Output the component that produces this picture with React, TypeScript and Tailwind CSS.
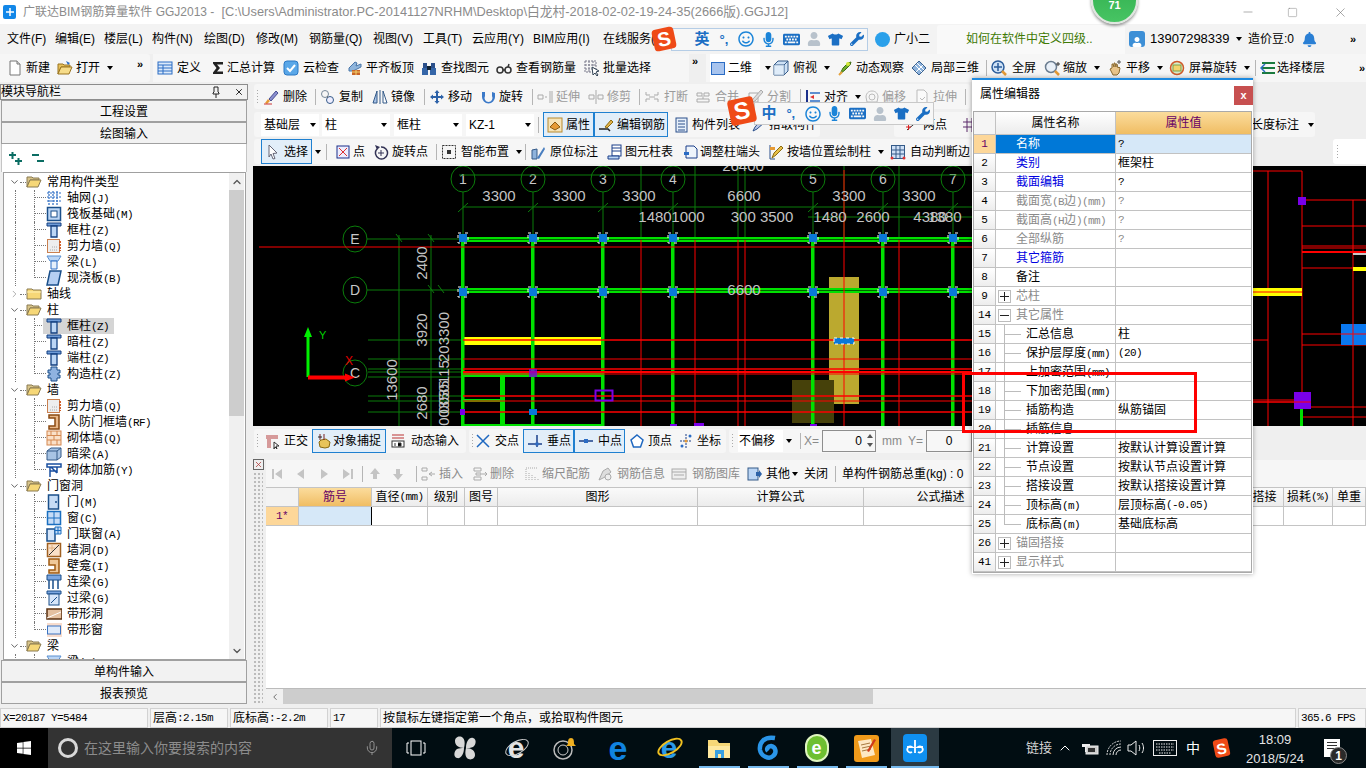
import { ReactNode } from "react";
import clsx from "clsx";
import { FaBell, FaKeyboard, FaMicrophone, FaRegSmile, FaTshirt, FaUser, FaWindows, FaWrench } from "react-icons/fa";
import { Minus, Square, X as XIcon, ChevronDown, ChevronRight, ChevronUp, Mic } from "lucide-react";

const TITLE_A = "广联达BIM钢筋算量软件 GGJ2013 -";
const TITLE_B = "[C:\\Users\\Administrator.PC-20141127NRHM\\Desktop\\白龙村-2018-02-02-19-24-35(2666版).GGJ12]";

// half-width latin in the old bitmap look, used in tree / grids
function Mixed({ text }: { text: string }) {
  const parts = text.split(/([\x00-\x7f]+)/).filter(Boolean);
  return (
    <>
      {parts.map((p, i) =>
        /^[\x00-\x7f]+$/.test(p) ? (
          <span key={i} className="font-['Liberation_Mono',monospace] text-[11px] tracking-[-0.6px]">{p}</span>
        ) : (
          <span key={i}>{p}</span>
        ),
      )}
    </>
  );
}

const B = "#2b6cc4";
const L = "#bcd6f5";
const O = "#e59a35";
const Y = "#f3d36b";
const D = "#555";

const icons: Record<string, ReactNode> = {
  doc: <><path d="M3 1h7l3 3v11H3z" fill="#fff" stroke="#777" /><path d="M10 1v3h3" fill="#ddd" stroke="#777" /></>,
  open: <><path d="M1 14V4h5l1 1h6v2H4z" fill="#e8c15a" stroke="#9a7420" /><path d="M1 14l3-7h11l-3 7z" fill="#f6dc8a" stroke="#9a7420" /><path d="M9 1l4 2-2 2z" fill={B} /></>,
  define: <><rect x="1" y="2" width="14" height="12" fill="#dceafa" stroke={B} /><path d="M1 5h14M1 8h14M1 11h14M6 5v9" stroke={B} /></>,
  sigma: <path d="M3 2h10v2.500H7l3 3.500-3 3.500h6V14H3v-1.500L6.500 8 3 3.500z" fill="#222" />,
  cloud: <><rect x="1" y="1" width="14" height="14" rx="3" fill="#5aa7e8" stroke="#2b78c4" /><path d="M4 8l3 3 5-6" stroke="#fff" strokeWidth="2" fill="none" /></>,
  level: <><path d="M2 8l6-6 2 1-1 3 5-2v3L6 11H2z" fill="#8fb5dc" stroke="#4a76a8" /><rect x="5" y="10" width="8" height="5" fill="#c9652a" /><path d="M5 12h8M9 10v5" stroke="#f3d36b" /></>,
  binoc: <><rect x="2" y="3" width="4" height="5" fill="#2a4f8a" /><rect x="10" y="3" width="4" height="5" fill="#2a4f8a" /><rect x="1" y="8" width="6" height="7" fill="#3566a8" /><rect x="9" y="8" width="6" height="7" fill="#3566a8" /><rect x="6" y="6" width="4" height="4" fill="#123" /></>,
  glasses: <><circle cx="4" cy="10" r="3" fill="none" stroke="#333" strokeWidth="1.500" /><circle cx="12" cy="10" r="3" fill="none" stroke="#333" strokeWidth="1.500" /><path d="M7 10h2M12 7l1-3" stroke="#333" strokeWidth="1.500" /></>,
  batch: <><path d="M1 1h11v11H1zM1 5h11M1 9h11M5 1v11M9 1v11" fill="none" stroke="#778" strokeDasharray="2 1" /><path d="M8 7l7 4-3 1 2 3-1 1-2-3-2 2z" fill="#fff" stroke="#345" /></>,
  sq2d: <rect x="1.500" y="2.500" width="13" height="12" fill="#a8c4ee" stroke={B} />,
  cube: <><path d="M1 5l4-4h10v10l-4 4H1z" fill="#cfe2f6" stroke="#345a88" /><path d="M1 5h10v10M11 5l4-4" fill="none" stroke="#345a88" /><rect x="1" y="5" width="10" height="10" fill="#eaf3fb" opacity=".6" /></>,
  orbit: <><path d="M3 14l3-6 5-5 3-1-1 3-5 5z" fill="#6fae2c" stroke="#3d6b12" /><circle cx="11" cy="4" r="2" fill="#d3e83d" /><path d="M2 15l3-3" stroke="#e8a33d" strokeWidth="2" /></>,
  cube3: <><path d="M8 1l7 7-7 7-7-7z" fill="#8eb3dc" stroke="#38608f" /><path d="M4 5l7 7M12 5l-7 7M6 3l7 7" stroke="#fff" /></>,
  full: <><circle cx="7" cy="7" r="6" fill="#cfe2f6" stroke="#2b5c9a" strokeWidth="1.500" /><path d="M7 3v8M3 7h8" stroke="#2b5c9a" strokeWidth="1.500" /><path d="M11 11l4 4" stroke={O} strokeWidth="2.500" /></>,
  zoomq: <><circle cx="7" cy="7" r="5.500" fill="#e9f0f8" stroke="#6b7d90" strokeWidth="1.500" /><path d="M11 11l4 4" stroke={O} strokeWidth="2.500" /><path d="M14 2v4M12 4h4" stroke="#333" /></>,
  hand: <><path d="M3 9l2-1V4l1 0 1 3V3l1 0 1 4V4l1 0 1 4 1-1 1 1-1 5-2 2H6z" fill="#e8c48a" stroke="#8a6a30" /><path d="M12 0v4M10 2h4" stroke="#555" /></>,
  rotscr: <><circle cx="8" cy="8" r="6.500" fill="#d8ecc8" stroke="#d05a2a" strokeWidth="1.500" /><rect x="4" y="5" width="8" height="6" fill={Y} stroke="#7aa04a" /></>,
  layers: <><path d="M2 3h13M2 8h13M2 13h13" stroke="#1b7a3e" strokeWidth="2" /><path d="M5 4L1 8l4 4" stroke="#2b6cc4" strokeWidth="1.500" fill="none" /></>,
  eraser: <><path d="M2 14l3-4 2 2-3 3z" fill={O} /><path d="M6 10l7-8 2 2-7 8z" fill="#8a8fd0" stroke="#4a4f90" /><path d="M1 15h8" stroke="#c33" /></>,
  copy: <><circle cx="5" cy="5" r="3.500" fill="none" stroke="#789" /><circle cx="10" cy="11" r="3.500" fill="#eef" stroke="#345a88" /><path d="M7 8l1 0" stroke={D} /></>,
  mirror: <><path d="M1 14l4-12v12z" fill="#a9c4e8" stroke="#345a88" /><path d="M15 14L11 2v12z" fill="#fff" stroke="#345a88" /><path d="M8 1v14" stroke="#345a88" /></>,
  move: <path d="M8 1l2.500 3H9v3h3V5.500L15 8l-3 2.500V9H9v3h1.500L8 15l-2.500-3H7V9H4v1.500L1 8l3-2.500V7h3V4H5.500z" fill="#2d62a8" />,
  rotcw: <path d="M4 3v4a4 4 0 1 0 7 0V3l3 1v4a6.500 6.500 0 1 1-13 0V3z" fill="#3b79c8" />,
  extend: <path d="M1 6h5v4H1zM8 8h2M13 2v12M15 2v12" stroke="#aaa" fill="none" />,
  trim: <path d="M1 6h5v4H1zM15 6h-5v4h5zM8 1v14" stroke="#aaa" fill="none" />,
  brk: <path d="M2 3v3h4M14 3v3h-4M2 13v-3h4M14 13v-3h-4M5 8h6" stroke="#aaa" fill="none" />,
  merge: <path d="M2 4h5v3H2zM9 4h5v3H9zM2 10h12v3H2zM8 7v3" stroke="#aaa" fill="none" />,
  split: <><path d="M2 4h9v9H2z" fill="#f5f5f5" stroke="#aaa" /><path d="M14 1l-8 9-1 3 3-1 8-9z" fill="#ddd" stroke="#aaa" /></>,
  align: <><path d="M2 1v14" stroke="#1a2f8a" strokeWidth="2" /><path d="M5 4h10M5 12h10" stroke="#2b6cc4" strokeWidth="1.500" /><path d="M5 8l4-2v4z" fill="#d33" /></>,
  offset: <><path d="M8 2c4 0 6 3 6 6l-1 5H3L2 8c0-3 2-6 6-6z" fill="none" stroke="#bbb" /><circle cx="8" cy="8" r="3" fill="none" stroke="#bbb" /></>,
  stretch: <><path d="M3 1h7l3 3v11H3z" fill="#fafafa" stroke="#bbb" /><path d="M6 9l2 2 3-3" stroke="#bbb" fill="none" /></>,
  prop: <><rect x="1" y="1" width="14" height="14" fill="#f6e4b8" stroke="#b88a30" /><path d="M3 10l5-5 5 5-5 3z" fill={O} stroke="#8a5a10" /></>,
  edit: <><path d="M1 12h9l2 2" stroke="#222" fill="none" strokeWidth="1.500" /><path d="M7 10l6-7 2 2-6 6z" fill="#e2b24a" stroke="#8a6a10" /></>,
  list: <><rect x="2" y="1" width="11" height="14" fill="#e7f0fa" stroke="#2a4f8a" /><path d="M4 4h7M4 7h7M4 10h7M4 13h7" stroke="#2a4f8a" /></>,
  pick: <path d="M2 14l2-4 7-8 3 3-8 7z" fill="#b8c6e8" stroke="#2a4f8a" />,
  two: <><path d="M2 13l12-10" stroke="#333" /><path d="M1 10h5M3.500 8v5M11 5h5M13.500 3v5" stroke="#d22" /></>,
  hatch: <path d="M1 5h14M1 10h14M5 1v14M10 1v14" stroke="#5a2a6a" fill="none" />,
  cursor: <path d="M4 1l8 8-4 .500 2 5-2 .500-2-5-2 3z" fill="#fff" stroke="#667" />,
  pt: <><rect x="2" y="2" width="12" height="12" fill="#eef" stroke="#1a2f8a" /><path d="M4 4l8 8M12 4l-8 8" stroke="#d33" /></>,
  rotpt: <><path d="M4 5a6 6 0 1 0 4-2" fill="none" stroke="#335" strokeWidth="1.500" /><path d="M2 1l5 2-3 3z" fill="#335" /><path d="M8 6v6M5 9h6" stroke="#335" /></>,
  smart: <><rect x="1.500" y="1.500" width="13" height="13" fill="#f5f5f5" stroke="#333" strokeDasharray="2 1" /><rect x="6" y="6" width="4" height="4" fill="#333" /></>,
  mark: <><path d="M2 15V6l5-1v10z" fill="#8eb3dc" stroke="#345a88" /><path d="M7 14l7-11 1 2-6 10z" fill="#4a7fc0" /></>,
  table: <><rect x="5" y="1" width="9" height="11" fill="#fff" stroke="#1a3f8a" /><path d="M5 4h9M5 7h9" stroke="#1a3f8a" /><path d="M1 12h11v3H1z" fill={L} stroke="#1a3f8a" /></>,
  adjust: <><path d="M3 2h8l3 3v9H3z" fill="#eef4fb" stroke="#1a3f8a" /><path d="M1 8h5v3H1z" fill={B} /></>,
  wallcol: <><path d="M2 1v14h5" stroke="#2a4f8a" fill="none" /><path d="M4 14l2-5 7-7 2 2-7 7z" fill="#e8c14a" stroke="#8a6a10" /><rect x="2" y="3" width="5" height="3" fill={O} /></>,
  auto: <><rect x="1.500" y="1.500" width="13" height="13" fill="#cfe0f6" stroke="#345a88" /><path d="M1 6h14M1 10h14M6 1v14M10 1v14" stroke="#345a88" /><circle cx="2" cy="14" r="1.500" fill="#d33" /><circle cx="14" cy="14" r="1.500" fill="#d33" /></>,
  ortho: <><path d="M2 2h12v4H7v9H3V6H2z" fill="#d69a9a" /><path d="M10 9l5 4-3 0 1 3-2-2-1 2z" fill="#fff" stroke="#333" /></>,
  snap: <><path d="M3 9l2-2 5-1 4 3-1 5-4 1-5-1z" fill="#e8c45a" stroke="#8a6a10" /><path d="M4 1v6M8 1v6" stroke="#7a2020" /><path d="M2 4h4" stroke="#222" /></>,
  dyn: <><path d="M2 2h12M2 5h12" stroke="#b33" /><rect x="2" y="8" width="12" height="6" fill="#fff" stroke="#333" /><path d="M5 10v3M8 10h3v3H8" stroke="#333" /></>,
  cross: <path d="M2 2l12 12M14 2L2 14" stroke="#1f68c0" strokeWidth="1.500" />,
  perp: <><path d="M1 11h14" stroke="#1a3f8a" strokeWidth="1.500" /><path d="M10 2v12" stroke="#1a3f8a" strokeWidth="1.500" /><rect x="8.500" y="9.500" width="3" height="3" fill="#2b6cc4" /></>,
  mid: <><path d="M1 8h14" stroke="#1a3f8a" strokeWidth="1.500" /><rect x="6" y="6" width="4" height="4" fill="#2b6cc4" /></>,
  vertex: <path d="M8 2l6 5-2.500 7h-7L2 7z" fill="#fff" stroke="#1f68c0" strokeWidth="1.500" />,
  coord: <><path d="M8 1v14M2 8h12" stroke="#1a3f8a" strokeDasharray="2 1" /><circle cx="4" cy="13" r="1.500" fill={B} /><circle cx="12" cy="3" r="1.500" fill={B} /><circle cx="8" cy="8" r="1.500" fill={O} /></>,
  first: <path d="M3 3h2v10H3zM13 3v10L6 8z" fill="#c4c4c4" />,
  prev: <path d="M11 3v10L4 8z" fill="#c4c4c4" />,
  next: <path d="M5 3v10l7-5z" fill="#c4c4c4" />,
  last: <path d="M11 3h2v10h-2zM3 3v10l7-5z" fill="#c4c4c4" />,
  up: <path d="M8 2l5 6h-3v5H6V8H3z" fill="#c4c4c4" />,
  down: <path d="M8 14l5-6h-3V3H6v5H3z" fill="#c4c4c4" />,
  insert: <path d="M1 2h5v3H1zM1 11h5v3H1zM8 8h6M11 6l-3 2 3 2" stroke="#aaa" fill="none" />,
  del: <path d="M2 2h7v3H2zM2 11h7v3H2zM4 7h5v2H4zM10 8h5M13 6l2 2-2 2" stroke="#aaa" fill="none" />,
  scale: <path d="M2 14V3M5 14V6M8 14V8M11 14V10M14 14v-2M2 2h12" stroke="#aaa" strokeDasharray="1 1" fill="none" />,
  info: <><path d="M2 14l4-9 5-3 3 4-6 5z" fill="#ddd" stroke="#aaa" /><circle cx="11" cy="11" r="3" fill="#eee" stroke="#aaa" /></>,
  lib: <><rect x="1" y="3" width="14" height="10" fill="#eee" stroke="#aaa" /><path d="M1 6h14M3 9h10" stroke="#aaa" /></>,
  other: <><rect x="1" y="2" width="10" height="12" fill={L} stroke="#345a88" /><path d="M9 6h3V4l3 4-3 4v-2H9z" fill="#2d62a8" /></>,
};

const tree: Record<string, ReactNode> = {
  fo: <><path d="M1 13V3h5l1 1h6v2H4z" fill="#d8c48a" stroke="#8a7a50" /><path d="M1 13l3-7h11l-3 7z" fill="#f6d777" stroke="#8a7a50" /></>,
  fc: <><path d="M1 13V3h5l1 1h8v9z" fill="#f6d777" stroke="#8a7a50" /><path d="M1 6h14" stroke="#fff2b8" /></>,
  grid: <path d="M1 3h14M1 7h14M1 11h14M3 1v14M7 1v14M11 1v14" stroke={B} strokeDasharray="2 1" fill="none" strokeWidth="1.200" />,
  raft: <><rect x="1.500" y="1.500" width="13" height="13" fill={L} stroke="#1a4f8a" strokeWidth="1.500" /><rect x="5" y="5" width="6" height="6" fill="#fff" stroke="#1a4f8a" /></>,
  col: <><path d="M1 1h14v3H1z" fill="#6f9cd8" stroke="#123f80" /><path d="M5 4h6v11H5z" fill="#bcd6f5" stroke="#123f80" strokeWidth="1.300" /></>,
  wall: <><rect x="1.500" y="1.500" width="12" height="13" fill="#eee" stroke="#c98050" /><path d="M4 12h8M6 9h6" stroke="#aaa" strokeDasharray="1 1" /><path d="M14 3v10" stroke="#d0602a" strokeDasharray="2 1" strokeWidth="2" /></>,
  beam: <><path d="M1 2h14l-3 5H4z" fill={L} stroke="#5a90d0" /><path d="M5 7h6v8H5z" fill="#e6f0fb" stroke="#2b6cc4" /></>,
  slab: <path d="M4 1h11l-3 14H1z" fill="#b5cff2" stroke="#1a4f8a" strokeWidth="1.500" />,
  gz: <path d="M5 1h6v3h3v3h-2v2h2v3h-3v3H5v-3H2V9h2V7H2V4h3z" fill="#8fb2e0" stroke="#1a4f8a" />,
  dwall: <path d="M3 1h10v14H3v-3h6V4H3z" fill="#e8b88a" stroke="#8a4a12" strokeWidth="1.500" />,
  brick: <><rect x="1" y="1" width="14" height="14" fill="#fae0c8" stroke="#d48850" /><path d="M1 5.500h14M1 10h14M5 1v4.500M11 1v4.500M8 5.500V10M5 10v5M11 10v5" stroke="#d48850" /></>,
  hidden: <><path d="M1 5l4-3h10v9l-4 3H1z" fill="#a8c4e4" stroke="#345a88" /><path d="M1 5h10v9M11 5l4-3" fill="none" stroke="#345a88" /></>,
  add: <path d="M1 2h14v3H1zM4 5v10M11 5v6M5 5l6 6M4 9h7" fill="none" stroke="#1a4fa0" strokeWidth="1.500" />,
  door: <><rect x="2.500" y="1" width="10" height="14" fill="#c6dcf6" stroke="#1a4f8a" strokeWidth="1.500" /><circle cx="10" cy="8" r="1" fill="#1a4f8a" /></>,
  win: <><rect x="1.500" y="1.500" width="13" height="13" fill="#c6dcf6" stroke="#1a6fc0" strokeWidth="1.500" /><path d="M8 1v14M1 8h14" stroke="#1a6fc0" /></>,
  dw: <><path d="M1 3h8v12H1z" fill="#d6e6fa" stroke="#1a4f8a" strokeWidth="1.500" /><path d="M9 1h6v7H9z" fill="#c6dcf6" stroke="#1a6fc0" /><path d="M12 1v7M9 4.500h6" stroke="#1a6fc0" /></>,
  hole: <><rect x="1.500" y="1.500" width="13" height="13" fill="#fae0c8" stroke="#a06020" strokeWidth="1.500" /><path d="M3 13L13 3" stroke="#333" /><path d="M3 6h6M6 3v6" stroke="#e0b080" /></>,
  niche: <path d="M3 1h10v14H3v-3h6V7H3z" fill="#f0c898" stroke="#a05a10" strokeWidth="1.500" />,
  conn: <><path d="M1 1h14v5H1z" fill="#7ba6e0" stroke="#1a4f8a" /><path d="M3 6v9M7 6v9M12 6v9" stroke="#1a4f8a" strokeWidth="1.500" /></>,
  lintel: <><path d="M1 1h14v3H1z" fill="#7ba6e0" stroke="#1a4f8a" /><rect x="3" y="4" width="10" height="11" fill="#d6e6fa" stroke="#1a4f8a" /><path d="M5 13L11 7" stroke="#1a4f8a" /></>,
  strip: <><rect x="1" y="3" width="15" height="10" fill="#e4c0a0" stroke="#5a3010" strokeWidth="1.500" /><path d="M1 12L15 6" stroke="#fff" /></>,
  stripw: <><path d="M1 1h15v14H1z" fill="#f8dccc" /><rect x="1.500" y="4" width="13" height="8" fill="#dfeafa" stroke="#3b73c0" /></>,
};

function Ic({ n, s = 16 }: { n: string; s?: number }) {
  return (
    <svg width={s} height={s} viewBox="0 0 16 16" className="shrink-0">
      {icons[n] ?? tree[n]}
    </svg>
  );
}

function Caret({ className }: { className?: string }) {
  return <span className={clsx("inline-block w-0 h-0 border-x-[3px] border-x-transparent border-t-[4px] border-t-black shrink-0", className)} />;
}

function Grip() {
  return <div className="w-[3px] h-[16px] shrink-0 bg-[radial-gradient(#aaa_1px,transparent_1px)] bg-[length:3px_3px]" />;
}

type ToolProps = {
  w: string;
  n?: string;
  label: string;
  off?: boolean;
  arrow?: boolean;
  sep?: boolean;
  on?: boolean;
  gap?: string;
};

function Tool({ w, n, label, off, arrow, sep, on, gap = "ml-[3px]" }: ToolProps) {
  return (
    <div className={clsx("flex items-center h-full shrink-0", w, on && "border border-[#1f80d0] bg-[#e2eef9] pl-[3px]", off && "text-[#9b9b9b]")}>
      {n && <Ic n={n} />}
      <span className={clsx(gap, "whitespace-nowrap")}>{label}</span>
      {arrow && <Caret className="ml-[7px]" />}
      {sep && <span className="ml-auto mr-[4px] w-px h-[16px] bg-[#b5b5b5]" />}
    </div>
  );
}

function TitleBar() {
  return (
    <div className="h-[24px] bg-white flex items-center shrink-0">
      <div className="ml-[3px] w-[13px] h-[14px] bg-[#1287e8] rounded-[2px] flex items-center justify-center">
        <svg width="10" height="10" viewBox="0 0 10 10"><path d="M1 5h8M5 1v8" stroke="#fff" strokeWidth="1.500" /></svg>
      </div>
      <span className="ml-[7px] text-[#8b8b8b] whitespace-nowrap">{TITLE_A}</span>
      <span className="ml-[7px] text-[#8b8b8b] whitespace-nowrap text-[12.8px]">{TITLE_B}</span>
      <div className="ml-auto flex items-center text-[#777]">
        <Minus size={14} strokeWidth={1} className="mr-[32px]" />
        <Square size={11} strokeWidth={1} className="mr-[35px]" />
        <XIcon size={15} strokeWidth={1} className="mr-[18px]" />
      </div>
    </div>
  );
}

function SogouS({ className }: { className?: string }) {
  return (
    <div className={clsx("w-[22px] h-[22px] bg-[#ef4a17] rounded-[4px] -rotate-12 flex items-center justify-center text-white font-bold text-[20px] leading-none shrink-0", className)}>
      S
    </div>
  );
}

function ImeIcons({ ch }: { ch: string }) {
  return (
    <>
      <span className="w-[22px] text-center text-[15px] font-bold text-[#1b6fc4]">{ch}</span>
      <span className="w-[22px] text-center text-[13px] font-bold text-[#1b6fc4] leading-none">°,</span>
      <span className="w-[22px] flex justify-center text-[#1b84d8]"><FaRegSmile size={16} /></span>
      <span className="w-[22px] flex justify-center text-[#1b84d8]"><FaMicrophone size={15} /></span>
      <span className="w-[24px] flex justify-center text-[#1b6fc4]"><FaKeyboard size={17} /></span>
      <span className="w-[22px] flex justify-center text-[#b8c2cc]"><FaUser size={14} /></span>
      <span className="w-[21px] flex justify-center text-[#1b6fc4]"><FaTshirt size={15} /></span>
      <span className="w-[21px] flex justify-center text-[#1b6fc4]"><FaWrench size={14} /></span>
    </>
  );
}

const menus: [string, string][] = [
  ["文件(F)", "w-[48px]"], ["编辑(E)", "w-[49px]"], ["楼层(L)", "w-[48px]"], ["构件(N)", "w-[52px]"],
  ["绘图(D)", "w-[52px]"], ["修改(M)", "w-[53px]"], ["钢筋量(Q)", "w-[64px]"], ["视图(V)", "w-[50px]"],
  ["工具(T)", "w-[49px]"], ["云应用(Y)", "w-[61px]"], ["BIM应用(I)", "w-[70px]"], ["在线服务(S", "w-[53px]"],
];

function MenuRow() {
  return (
    <div className="h-[30px] flex items-center pl-[7px] bg-[#f3f3f3] shrink-0">
      {menus.map(([m, w]) => (
        <span key={m} className={clsx(w, "whitespace-nowrap shrink-0")}>{m}</span>
      ))}
      <SogouS className="-ml-[3px] z-10" />
      <div className="flex items-center h-[23px] w-[197px] border border-[#b5cde6] bg-[#f7f7f7] -ml-[4px] pl-[19px] shrink-0">
        <ImeIcons ch="英" />
      </div>
      <div className="w-[15px] h-[15px] ml-[7px] rounded-full bg-[#2aa0ea] shrink-0" />
      <span className="ml-[4px] w-[43px] shrink-0">广小二</span>
      <div className="h-[29px] w-[188px] bg-[#f9f9f9] rounded-t-[3px] flex items-center pl-[29px] text-[#3f7a05] shrink-0">如何在软件中定义四级..</div>
      <div className="ml-[4px] w-[16px] h-[16px] rounded-[3px] bg-[#3d8fd6] flex items-end justify-center text-white shrink-0"><FaUser size={10} /></div>
      <span className="ml-[5px] w-[83px] shrink-0 text-[13px]">13907298339</span>
      <Caret className="ml-[3px]" />
      <span className="ml-[6px] w-[54px] shrink-0">造价豆:0</span>
      <FaBell size={15} className="text-[#2a7fd4] shrink-0" />
      <span className="ml-[33px] text-[11px] font-bold">»</span>
    </div>
  );
}

function ToolRow1() {
  return (
    <div className="h-[28px] flex shrink-0 bg-[#efefef]">
      <div className="w-[150px] flex items-center pl-[7px] bg-[#f6f6f6] rounded-r-[3px] shrink-0">
        <Tool w="w-[50px]" n="doc" label="新建" />
        <Tool w="w-[80px]" n="open" label="打开" arrow />
        <span className="text-[11px] font-bold -mt-[8px]">»</span>
      </div>
      <div className="w-[536px] ml-[3px] flex items-center pl-[4px] bg-[#f6f6f6] shrink-0">
        <Tool w="w-[53px]" n="define" label="定义" gap="ml-[4px]" />
        <Tool w="w-[73px]" n="sigma" label="汇总计算" gap="ml-[1px]" />
        <Tool w="w-[64px]" n="cloud" label="云检查" gap="ml-[4px]" />
        <Tool w="w-[74px]" n="level" label="平齐板顶" />
        <Tool w="w-[75px]" n="binoc" label="查找图元" gap="ml-[4px]" />
        <Tool w="w-[88px]" n="glasses" label="查看钢筋量" gap="ml-[4px]" />
        <Tool w="w-[80px]" n="batch" label="批量选择" />
      </div>
      <span className="ml-[3px] w-[14px] text-[11px] font-bold -mt-[1px]">»</span>
      <div className="flex-1 flex items-center bg-[#f6f6f6] pl-[4px]">
        <div className="flex items-center h-full w-[63px] shrink-0">
          <div className="flex items-center bg-white h-full w-[50px]"><Ic n="sq2d" /><span className="ml-[2px]">二维</span></div>
          <Caret className="ml-[5px]" />
        </div>
        <Tool w="w-[64px]" n="cube" label="俯视" gap="ml-[4px]" arrow />
        <Tool w="w-[74px]" n="orbit" label="动态观察" />
        <Tool w="w-[80px]" n="cube3" label="局部三维" gap="ml-[4px]" sep />
        <Tool w="w-[53px]" n="full" label="全屏" gap="ml-[5px]" />
        <Tool w="w-[63px]" n="zoomq" label="缩放" gap="ml-[3px]" arrow />
        <Tool w="w-[62px]" n="hand" label="平移" gap="ml-[3px]" arrow />
        <Tool w="w-[91px]" n="rotscr" label="屏幕旋转" gap="ml-[4px]" arrow sep />
        <Tool w="w-[90px]" n="layers" label="选择楼层" gap="ml-[1px]" />
        <span className="ml-[9px] text-[11px] font-bold">»</span>
      </div>
    </div>
  );
}

type TreeItem = { n: string; t: string; sel?: boolean };
type TreeGroup = { t: string; open: boolean; items: TreeItem[] };

const treeData: TreeGroup[] = [
  { t: "常用构件类型", open: true, items: [
    { n: "grid", t: "轴网(J)" }, { n: "raft", t: "筏板基础(M)" }, { n: "col", t: "框柱(Z)" },
    { n: "wall", t: "剪力墙(Q)" }, { n: "beam", t: "梁(L)" }, { n: "slab", t: "现浇板(B)" },
  ] },
  { t: "轴线", open: false, items: [] },
  { t: "柱", open: true, items: [
    { n: "col", t: "框柱(Z)", sel: true }, { n: "col", t: "暗柱(Z)" }, { n: "col", t: "端柱(Z)" }, { n: "gz", t: "构造柱(Z)" },
  ] },
  { t: "墙", open: true, items: [
    { n: "wall", t: "剪力墙(Q)" }, { n: "dwall", t: "人防门框墙(RF)" }, { n: "brick", t: "砌体墙(Q)" },
    { n: "hidden", t: "暗梁(A)" }, { n: "add", t: "砌体加筋(Y)" },
  ] },
  { t: "门窗洞", open: true, items: [
    { n: "door", t: "门(M)" }, { n: "win", t: "窗(C)" }, { n: "dw", t: "门联窗(A)" }, { n: "hole", t: "墙洞(D)" },
    { n: "niche", t: "壁龛(I)" }, { n: "conn", t: "连梁(G)" }, { n: "lintel", t: "过梁(G)" },
    { n: "strip", t: "带形洞" }, { n: "stripw", t: "带形窗" },
  ] },
  { t: "梁", open: true, items: [{ n: "beam", t: "梁(L)" }] },
];

function TreeRow({ item, last }: { item: TreeItem; last: boolean }) {
  return (
    <div className="h-[16px] flex">
      <div className="ml-[11px] w-[19px] border-l border-dotted border-[#777] shrink-0" />
      {last ? (
        <div className="w-[12px] h-[8px] border-l border-b border-dotted border-[#777] shrink-0" />
      ) : (
        <div className="w-[12px] h-full border-l border-dotted border-[#777] shrink-0">
          <div className="h-[8px] border-b border-dotted border-[#777]" />
        </div>
      )}
      <div className={clsx("flex items-center h-[16px] -ml-[3px] pl-[3px] pr-[5px]", item.sel && "bg-[#d5d5d5]")}>
        <Ic n={item.n} />
        <span className="ml-[5px] whitespace-nowrap"><Mixed text={item.t} /></span>
      </div>
    </div>
  );
}

function Tree() {
  return (
    <div className="flex-1 min-h-0 ml-[3px] mr-[2px] border border-[#a0a0a0] bg-white flex overflow-hidden">
      <div className="flex-1 overflow-hidden pt-[1px]">
        {treeData.map((g) => (
          <div key={g.t + g.items.length}>
            <div className="h-[16px] flex items-center">
              <div className="ml-[5px] w-[11px] flex justify-center shrink-0 text-[#555]">
                {g.open ? <ChevronDown size={12} strokeWidth={2} /> : <ChevronRight size={12} strokeWidth={2} className="text-[#aaa]" />}
              </div>
              <span className="w-[6px] border-b border-dotted border-[#777] shrink-0" />
              <Ic n={g.open ? "fo" : "fc"} />
              <span className="ml-[5px]">{g.t}</span>
            </div>
            {g.items.map((it, i) => (
              <TreeRow key={it.t} item={it} last={i === g.items.length - 1} />
            ))}
          </div>
        ))}
      </div>
      <div className="w-[15px] mr-[1px] bg-[#f0f0f0] flex flex-col items-center shrink-0">
        <div className="h-[17px] flex items-center text-[#555]"><ChevronUp size={12} strokeWidth={2.500} /></div>
        <div className="w-full h-[226px] bg-[#cdcdcd]" />
        <div className="flex-1" />
        <div className="h-[17px] flex items-center text-[#555]"><ChevronDown size={12} strokeWidth={2.500} /></div>
      </div>
    </div>
  );
}

function NavButton({ label }: { label: string }) {
  return <div className="h-[22px] mx-[1px] pt-[2px] border border-[#a0a0a0] bg-[#f2f2f2] flex items-center justify-center shrink-0">{label}</div>;
}

function LeftPanel() {
  return (
    <div className="w-[248px] h-full flex flex-col shrink-0 pt-[2px]">
      <div className="h-[16px] border border-[#8c8c8c] bg-[#f2f2f2] flex items-center leading-none shrink-0 text-[12px]">
        <span>模块导航栏</span>
        <svg width="10" height="12" viewBox="0 0 10 12" className="ml-auto mr-[13px]"><path d="M3 1h4v5l1 1v1H2V7l1-1zM5 8v4" fill="none" stroke="#222" /></svg>
        <XIcon size={10} className="mr-[3px]" />
      </div>
      <NavButton label="工程设置" />
      <NavButton label="绘图输入" />
      <div className="h-[28px] mx-[1px] bg-white border-x border-[#c5c5c5] flex items-center pl-[5px] shrink-0">
        <svg width="40" height="16" viewBox="0 0 40 16">
          <path d="M2 5h7M5.500 2v7M8 11h7M11.500 8v7" stroke="#0b6d63" strokeWidth="2" />
          <path d="M25 5h7M30 11h7" stroke="#0b6d63" strokeWidth="2" />
        </svg>
      </div>
      <Tree />
      <NavButton label="单构件输入" />
      <NavButton label="报表预览" />
      <div className="h-[4px] shrink-0" />
    </div>
  );
}

function Strip({ children, className }: { children: ReactNode; className?: string }) {
  return <div className={clsx("flex items-center bg-[#f6f6f6] rounded-[3px] shrink-0 h-full", className)}>{children}</div>;
}

function RowA() {
  return (
    <div className="h-[25px] flex pl-[4px] shrink-0">
      <Strip className="w-[716px] pl-[2px]">
        <Grip />
        <div className="w-[5px]" />
        <Tool w="w-[57px]" n="eraser" label="删除" sep gap="ml-[4px]" />
        <Tool w="w-[52px]" n="copy" label="复制" />
        <Tool w="w-[57px]" n="mirror" label="镜像" sep />
        <Tool w="w-[52px]" n="move" label="移动" />
        <Tool w="w-[56px]" n="rotcw" label="旋转" sep gap="ml-[2px]" />
        <Tool w="w-[51px]" n="extend" label="延伸" off />
        <Tool w="w-[56px]" n="trim" label="修剪" off sep />
        <Tool w="w-[51px]" n="brk" label="打断" off gap="ml-[4px]" />
        <Tool w="w-[52px]" n="merge" label="合并" gap="ml-[4px]" off />
        <Tool w="w-[58px]" n="split" label="分割" gap="ml-[4px]" off sep />
        <Tool w="w-[59px]" n="align" label="对齐" arrow />
        <Tool w="w-[50px]" n="offset" label="偏移" off gap="ml-[2px]" />
        <Tool w="w-[56px]" n="stretch" label="拉伸" off gap="ml-[3px]" sep />
      </Strip>
    </div>
  );
}

function Drop({ w, label }: { w: string; label: string }) {
  return (
    <div className={clsx("h-[22px] bg-white flex items-center pl-[3px] pr-[3px] justify-between shrink-0", w)}>
      <span>{label}</span>
      <Caret />
    </div>
  );
}

function RowB() {
  return (
    <div className="h-[25px] flex pl-[4px] shrink-0">
      <Strip className="w-[566px] pl-[7px]">
        <Drop w="w-[58px]" label="基础层" />
        <div className="w-[3px]" />
        <Drop w="w-[68px]" label="柱" />
        <div className="w-[4px]" />
        <Drop w="w-[68px]" label="框柱" />
        <div className="w-[4px]" />
        <Drop w="w-[68px]" label="KZ-1" />
        <span className="ml-[4px] w-px h-[16px] bg-[#b5b5b5]" />
        <div className="w-[4px]" />
        <Tool w="w-[51px]" n="prop" label="属性" on gap="ml-[3px]" />
        <Tool w="w-[74px]" n="edit" label="编辑钢筋" on gap="ml-[3px]" />
        <div className="w-[6px]" />
        <Tool w="w-[77px]" n="list" label="构件列表" gap="ml-[2px]" />
        <Tool w="w-[64px]" n="pick" label="拾取构件" gap="ml-[2px]" />
      </Strip>
      <Strip className="ml-[74px] w-[421px] pl-[11px]">
        <Tool w="w-[57px]" n="two" label="两点" gap="ml-[2px]" />
        <Ic n="hatch" />
        <div className="w-[273px]" />
        <span>长度标注</span>
        <Caret className="ml-[9px]" />
      </Strip>
    </div>
  );
}

function RowC() {
  return (
    <div className="h-[25px] flex pl-[4px] shrink-0">
      <Strip className="w-[718px] pl-[7px]">
        <Tool w="w-[51px]" n="cursor" label="选择" on gap="ml-[3px]" />
        <Caret className="ml-[3px]" />
        <span className="ml-[5px] w-px h-[16px] bg-[#b5b5b5]" />
        <div className="w-[8px]" />
        <Tool w="w-[38px]" n="pt" label="点" gap="ml-[2px]" />
        <Tool w="w-[68px]" n="rotpt" label="旋转点" sep gap="ml-[3px]" />
        <Tool w="w-[89px]" n="smart" label="智能布置" arrow sep gap="ml-[4px]" />
        <Tool w="w-[77px]" n="mark" label="原位标注" gap="ml-[4px]" />
        <Tool w="w-[76px]" n="table" label="图元柱表" gap="ml-[2px]" />
        <Tool w="w-[85px]" n="adjust" label="调整柱端头" gap="ml-[1px]" />
        <Tool w="w-[122px]" n="wallcol" label="按墙位置绘制柱" arrow gap="ml-[3px]" />
        <Tool w="w-[76px]" n="auto" label="自动判断边" gap="ml-[4px]" />
      </Strip>
      <div className="ml-[361px] w-[33px] bg-white flex items-center pl-[3px] rounded-l-[3px]"><Grip /></div>
    </div>
  );
}

const colX = [463, 533, 603, 673, 813, 883, 953];
const labels = ["1", "2", "3", "4", "5", "6", "7"];
const dims: [number, number, string][] = [
  [499, 201, "3300"], [569, 201, "3300"], [639, 201, "3300"], [744, 201, "6600"], [849, 201, "3300"], [919, 201, "3300"],
  [655, 222, "1480"], [688, 222, "1000"], [762, 222, "300 3500"], [830, 222, "1480"], [873, 222, "2600"], [930, 222, "4380"], [945, 222, "1380"],
  [744, 295, "6600"], [743, 171, "26400"],
];
const vDims: [number, number, string][] = [
  [427, 263, "2400"], [427, 330, "3920"], [449, 337, "203300"], [397, 380, "13600"], [427, 403, "2680"], [449, 393, "00350115"], [449, 397, "0035"],
];
const redH: [number, number, number, number][] = [
  [259, 972, 247, 1], [463, 972, 340, 1.500], [463, 972, 359, 1], [463, 972, 369, 1.500], [463, 972, 372, 2], [463, 972, 374, 1],
  [463, 972, 396, 1.500], [463, 972, 401, 1], [463, 972, 412, 1.500],
  [1252, 1302, 171, 1], [1302, 1366, 200, 1], [1302, 1366, 226, 1], [1302, 1366, 246, 1], [1302, 1366, 248, 1], [1302, 1366, 252, 2],
  [1302, 1366, 268, 1], [1302, 1366, 334, 1], [1302, 1366, 345, 1], [1252, 1302, 400, 1], [1252, 1302, 402, 1], [1302, 1366, 407, 1], [1302, 1366, 417, 1],
  [1252, 1302, 292, 1], [1252, 1268, 340, 1],
];
const redV: [number, number, number][] = [
  [641, 240, 426], [695, 240, 426], [738, 240, 426], [745, 240, 426], [844, 170, 426], [899, 240, 426], [1268, 171, 426], [1302, 171, 426], [1353, 200, 426],
];

function Node({ x, y }: { x: number; y: number }) {
  return (
    <g>
      <rect x={x - 5} y={y - 5} width="10" height="10" fill="none" stroke="#fff" strokeDasharray="3 4" />
      <rect x={x - 4} y={y - 4} width="8" height="8" fill="#0a78d8" />
    </g>
  );
}

function Cad() {
  const g = "#0b7d0b";
  return (
    <div className="h-[260px] ml-[3px] bg-black shrink-0">
      <svg width="1113" height="260" viewBox="253 166 1113 260" className="block">
        {colX.map((x, i) => (
          <g key={x}>
            <line x1={x} y1="192" x2={x} y2="426" stroke={g} />
            <ellipse cx={x} cy="179" rx="12" ry="13" fill="none" stroke={g} />
            <text x={x} y="184" fill="#c8c8c8" fontSize="14" textAnchor="middle" fontFamily="Liberation Sans">{labels[i]}</text>
            <line x1={x - 5} y1="212" x2={x + 5} y2="203" stroke={g} />
          </g>
        ))}
        {[641, 695, 738, 745, 844, 899].map((x) => (
          <line key={x} x1={x} y1="166" x2={x} y2="240" stroke={g} />
        ))}
        <line x1="459" y1="175" x2="972" y2="175" stroke={g} />
        <line x1="463" y1="207" x2="972" y2="207" stroke={g} />
        <line x1="808" y1="217" x2="972" y2="217" stroke={g} />
        {/* left axis bubbles and dim lines */}
        {[["E", 239], ["D", 290], ["C", 373]].map(([t, y]) => (
          <g key={t as string}>
            <ellipse cx="355" cy={y as number} rx="12" ry="13" fill="none" stroke={g} />
            <text x="355" y={(y as number) + 5} fill="#c8c8c8" fontSize="14" textAnchor="middle" fontFamily="Liberation Sans">{t}</text>
          </g>
        ))}
        {[[367, 239], [367, 290], [368, 340], [368, 359], [368, 369], [368, 372], [368, 377], [368, 396], [368, 401], [368, 412]].map(([x, y]) => (
          <line key={y} x1={x} y1={y} x2="463" y2={y} stroke={g} />
        ))}
        <line x1="399" y1="235" x2="399" y2="426" stroke={g} />
        <line x1="431" y1="235" x2="431" y2="426" stroke={g} />
        <path d="M396 234l6 8M428 234l6 8M428 285l6 8M438 285l6 8" stroke={g} fill="none" />
        {/* columns of concrete */}
        <rect x="829" y="277" width="30" height="127" fill="#bba92f" />
        <rect x="792" y="380" width="42" height="43" fill="#46410a" />
        <rect x="463" y="337" width="140" height="8" fill="#ffff00" />
        {/* rebar beams */}
        {colX.map((x) => (
          <rect key={x} x={x - 2} y="239" width="3.500" height="187" fill="#00e000" />
        ))}
        <rect x="463" y="237" width="509" height="5" fill="#00e000" />
        <rect x="463" y="239" width="509" height="1" fill="#006000" />
        <rect x="463" y="288" width="509" height="5" fill="#00e000" />
        <rect x="463" y="290" width="509" height="1" fill="#006000" />
        <rect x="463" y="373" width="140" height="4" fill="#00e000" />
        <rect x="500" y="375" width="5" height="51" fill="#00e000" />
        <rect x="463" y="399" width="40" height="3" fill="#00e000" />
        <rect x="463" y="424" width="140" height="2" fill="#00e000" />
        {/* red layout lines */}
        {redV.map(([x, a, b], i) => (
          <line key={i} x1={x} y1={a} x2={x} y2={b} stroke="#ff0000" />
        ))}
        {redH.map(([a, b, y, w], i) => (
          <line key={i} x1={a} y1={y} x2={b} y2={y} stroke="#ff0000" strokeWidth={w} />
        ))}
        <rect x="1252" y="288" width="50" height="8" fill="#ffff00" />
        <line x1="1252" y1="292" x2="1302" y2="292" stroke="#ff0000" />
        <rect x="1353" y="267" width="13" height="4" fill="#ffff00" />
        <rect x="1353" y="253" width="13" height="2" fill="#c8c8c8" />
        <rect x="1341" y="324" width="25" height="21" fill="#0a78f0" />
        <line x1="1353" y1="324" x2="1353" y2="345" stroke="#ff0000" />
        <line x1="1341" y1="334" x2="1366" y2="334" stroke="#ff0000" />
        <rect x="1298" y="197" width="8" height="8" fill="#7a00e8" />
        <rect x="1294" y="392" width="17" height="17" fill="#7a00e8" />
        <rect x="1300" y="409" width="3" height="17" fill="#00e000" />
        <line x1="1252" y1="402" x2="1311" y2="402" stroke="#ff0000" />
        {/* nodes */}
        {colX.map((x) => (
          <g key={x}>
            <Node x={x} y={238} />
            <Node x={x} y={292} />
          </g>
        ))}
        <rect x="834" y="338" width="20" height="6" fill="#0a78d8" stroke="#fff" strokeDasharray="3 3" />
        <rect x="595.500" y="390.500" width="17" height="10" fill="none" stroke="#7a00e8" strokeWidth="2" />
        <rect x="529" y="369" width="8" height="8" fill="#7a00e8" opacity=".75" />
        <rect x="529" y="409" width="8" height="6" fill="#0a78d8" />
        <rect x="460" y="409" width="5" height="6" fill="#7a00e8" />
        <rect x="670" y="424" width="7" height="2" fill="#7a00e8" />
        <rect x="694" y="423" width="10" height="3" fill="#7a00e8" />
        <rect x="810" y="424" width="7" height="2" fill="#7a00e8" />
        {/* UCS marker */}
        <path d="M308 327l4 10h-2.500v40h-3v-40H304z" fill="#00f000" />
        <path d="M308 375.500h37v-2l10 4-10 4v-2h-37z" fill="#ff0000" />
        <text x="319" y="339" fill="#00d000" fontSize="11" fontFamily="Liberation Sans">Y</text>
        <text x="345" y="365" fill="#e00000" fontSize="12" fontFamily="Liberation Sans">X</text>
        {dims.map(([x, y, t], i) => (
          <text key={i} x={x} y={y} fill="#c4c4c4" fontSize="15" textAnchor="middle" fontFamily="Liberation Sans">{t}</text>
        ))}
        {vDims.map(([x, y, t], i) => (
          <text key={i} transform={`translate(${x} ${y}) rotate(-90)`} fill="#c4c4c4" fontSize="15" textAnchor="middle" fontFamily="Liberation Sans">{t}</text>
        ))}
      </svg>
    </div>
  );
}

function SnapBar() {
  return (
    <div className="h-[24px] flex pl-[4px] shrink-0 mt-[3px]">
      <Strip className="w-[212px] pl-[2px]">
        <Grip />
        <div className="w-[5px]" />
        <Tool w="w-[48px]" n="ortho" label="正交" gap="ml-[4px]" />
        <Tool w="w-[74px]" n="snap" label="对象捕捉" on gap="ml-[1px]" />
        <div className="w-[4px]" />
        <Tool w="w-[72px]" n="dyn" label="动态输入" gap="ml-[5px]" />
      </Strip>
      <Strip className="ml-[3px] w-[257px] pl-[2px]">
        <Grip />
        <div className="w-[1px]" />
        <Tool w="w-[48px]" n="cross" label="交点" gap="ml-[4px]" />
        <Tool w="w-[51px]" n="perp" label="垂点" on gap="ml-[4px]" />
        <Tool w="w-[51px]" n="mid" label="中点" on gap="ml-[4px]" />
        <div className="w-[4px]" />
        <Tool w="w-[49px]" n="vertex" label="顶点" gap="ml-[3px]" />
        <Tool w="w-[45px]" n="coord" label="坐标" gap="ml-[3px]" />
      </Strip>
      <Strip className="ml-[3px] w-[243px] pl-[2px]">
        <Grip />
        <div className="ml-[4px] w-[45px] h-[22px] bg-white flex items-center pl-[1px] shrink-0">不偏移</div>
        <Caret className="ml-[3px]" />
        <span className="ml-[8px] w-px h-[16px] bg-[#b5b5b5]" />
        <span className="ml-[3px] w-[18px] text-[#8a8a8a]">X=</span>
        <div className="w-[54px] h-[22px] border border-[#8e8e8e] bg-[#f7f7f7] flex items-center justify-end shrink-0 relative">
          <span className="mr-[13px]">0</span>
          <div className="absolute right-[2px] top-[3px] flex flex-col gap-[5px]">
            <span className="w-0 h-0 border-x-[3px] border-x-transparent border-b-[4px] border-b-[#555]" />
            <span className="w-0 h-0 border-x-[3px] border-x-transparent border-t-[4px] border-t-[#555]" />
          </div>
        </div>
        <span className="ml-[6px] text-[#8a8a8a] w-[26px]">mm</span>
        <span className="text-[#8a8a8a] w-[18px]">Y=</span>
        <div className="w-[46px] h-[22px] border border-[#8e8e8e] bg-[#f7f7f7] flex items-center justify-center shrink-0">0</div>
      </Strip>
    </div>
  );
}

const gridCols = [
  { t: "筋号", w: "w-[73px]", hot: true },
  { t: "直径(mm)", w: "w-[56px]" },
  { t: "级别", w: "w-[37px]" },
  { t: "图号", w: "w-[33px]" },
  { t: "图形", w: "w-[200px]" },
  { t: "计算公式", w: "w-[166px]" },
  { t: "公式描述", w: "w-[154px]" },
  { t: "", w: "w-[82px]" },
  { t: "", w: "w-[146px]" },
  { t: "搭接", w: "w-[38px]" },
  { t: "损耗(%)", w: "w-[49px]" },
  { t: "单重", w: "w-[33px]" },
];

function RebarGrid() {
  return (
    <div className="flex-1 min-h-0 bg-white flex flex-col">
      <div className="h-[20px] flex border-y border-[#c4c4c4] shrink-0">
        <div className="w-[33px] border-r border-[#c4c4c4] bg-[#f3f3f3] shrink-0" />
        {gridCols.map((c, i) => (
          <div key={i} className={clsx("h-full flex items-center justify-center border-r border-[#c4c4c4] shrink-0", c.w, c.hot ? "bg-linear-to-b from-[#fbdc9c] to-[#f0bd62] text-[#660066]" : "bg-linear-to-b from-[#fafafa] to-[#ececec]")}>
            <Mixed text={c.t} />
          </div>
        ))}
      </div>
      <div className="h-[19px] flex border-b border-[#c4c4c4] shrink-0">
        <div className="w-[33px] border-r border-[#c4c4c4] bg-[#fdd799] text-[#660066] flex items-center justify-center shrink-0"><Mixed text="1*" /></div>
        {gridCols.map((c, i) => (
          <div key={i} className={clsx("h-full border-r shrink-0", c.w, c.hot ? "bg-[#d6e8f8] border-black" : "border-[#c4c4c4]")} />
        ))}
      </div>
    </div>
  );
}

function GridPanel() {
  return (
    <div className="flex-1 min-h-0 flex mt-[7px] mb-[4px]">
      <div className="w-[16px] flex flex-col items-center shrink-0">
        <div className="w-[11px] h-[11px] border border-[#666] bg-[#eee] mt-[-1px] shrink-0 flex items-center justify-center"><XIcon size={9} className="text-[#a33]" /></div>
        <div className="w-[10px] flex-1 mt-[2px] bg-[radial-gradient(#bbb_1px,transparent_1px)] bg-[length:4px_4px]" />
      </div>
      <div className="flex-1 min-w-0 flex flex-col overflow-hidden">
        <div className="h-[27px] flex items-center bg-[#f6f6f6] shrink-0 pl-[3px] text-[#8c8c8c]">
          <Tool w="w-[24px]" n="first" label="" gap="ml-0" />
          <Tool w="w-[23px]" n="prev" label="" gap="ml-0" />
          <Tool w="w-[24px]" n="next" label="" gap="ml-0" />
          <Tool w="w-[27px]" n="last" label="" gap="ml-0" sep />
          <Tool w="w-[23px]" n="up" label="" gap="ml-0" />
          <Tool w="w-[31px]" n="down" label="" gap="ml-0" sep />
          <Tool w="w-[51px]" n="insert" label="插入" gap="ml-[2px]" />
          <Tool w="w-[52px]" n="del" label="删除" gap="ml-[2px]" />
          <Tool w="w-[73px]" n="scale" label="缩尺配筋" gap="ml-[2px]" />
          <Tool w="w-[74px]" n="info" label="钢筋信息" gap="ml-[4px]" />
          <Tool w="w-[76px]" n="lib" label="钢筋图库" gap="ml-[5px]" />
          <div className="flex items-center w-[57px] text-black shrink-0">
            <Ic n="other" />
            <span className="ml-[3px]">其他</span>
            <Caret className="ml-[2px]" />
          </div>
          <span className="w-[31px] text-black shrink-0">关闭</span>
          <span className="w-px h-[16px] bg-[#b5b5b5] mr-[6px] shrink-0" />
          <span className="text-black whitespace-nowrap">单构件钢筋总重(kg) : 0</span>
        </div>
        <RebarGrid />
        <div className="h-[16px] bg-[#f0f0f0] flex items-center shrink-0 border-t border-[#bbb]">
          <div className="w-[17px] flex justify-center"><ChevronRight size={10} className="rotate-180 text-[#555]" /></div>
          <div className="w-[590px] h-full bg-[#cdcdcd]" />
        </div>
      </div>
    </div>
  );
}

const propRows: { n: string; name: string; value?: string; kind?: "link" | "gray"; box?: "+" | "-"; sub?: boolean; end?: boolean; faint?: boolean; sel?: boolean }[] = [
  { n: "1", name: "名称", value: "?", sel: true },
  { n: "2", name: "类别", value: "框架柱", kind: "link" },
  { n: "3", name: "截面编辑", value: "?", kind: "link" },
  { n: "4", name: "截面宽(B边)(mm)", value: "?", kind: "gray", faint: true },
  { n: "5", name: "截面高(H边)(mm)", value: "?", kind: "gray", faint: true },
  { n: "6", name: "全部纵筋", value: "?", kind: "gray", faint: true },
  { n: "7", name: "其它箍筋", kind: "link" },
  { n: "8", name: "备注" },
  { n: "9", name: "芯柱", box: "+", kind: "gray" },
  { n: "14", name: "其它属性", box: "-", kind: "gray" },
  { n: "15", name: "汇总信息", value: "柱", sub: true },
  { n: "16", name: "保护层厚度(mm)", value: "(20)", sub: true },
  { n: "17", name: "上加密范围(mm)", sub: true },
  { n: "18", name: "下加密范围(mm)", sub: true },
  { n: "19", name: "插筋构造", value: "纵筋锚固", sub: true },
  { n: "20", name: "插筋信息", sub: true },
  { n: "21", name: "计算设置", value: "按默认计算设置计算", sub: true },
  { n: "22", name: "节点设置", value: "按默认节点设置计算", sub: true },
  { n: "23", name: "搭接设置", value: "按默认搭接设置计算", sub: true },
  { n: "24", name: "顶标高(m)", value: "层顶标高(-0.05)", sub: true },
  { n: "25", name: "底标高(m)", value: "基础底标高", sub: true, end: true },
  { n: "26", name: "锚固搭接", box: "+", kind: "gray" },
  { n: "41", name: "显示样式", box: "+", kind: "gray" },
];

function PropRow({ r }: { r: (typeof propRows)[number] }) {
  return (
    <div className="h-[19px] flex border-b border-[#c2c2c2]">
      <div className={clsx("w-[22px] shrink-0 border-r border-[#c2c2c2] flex items-center justify-center font-['Liberation_Mono',monospace] text-[11px]", r.sel ? "bg-[#fdd799] text-[#660066]" : "bg-linear-to-b from-white to-[#ededed]")}>{r.n}</div>
      <div className={clsx("w-[120px] shrink-0 border-r border-[#c2c2c2] flex items-center h-full", r.sel ? "bg-[#0078d7] text-white" : r.kind === "link" ? "text-[#0000e0]" : r.kind === "gray" ? "text-[#8a8a8a]" : "text-black")}>
        {r.box && (
          <div className="ml-[2px] w-[13px] h-[13px] border border-[#bcbcbc] flex items-center justify-center text-black shrink-0 mr-[5px]">
            <svg width="9" height="9" viewBox="0 0 9 9"><path d={r.box === "+" ? "M0 4.500h9M4.500 0v9" : "M0 4.500h9"} stroke="#222" /></svg>
          </div>
        )}
        {r.sub && (
          <>
            <div className={clsx("ml-[8px] w-px bg-[#bcbcbc] shrink-0 self-start", r.end ? "h-[10px]" : "h-[19px]")} />
            <div className="w-[16px] h-px bg-[#bcbcbc] shrink-0" />
            <span className="w-[5px] shrink-0" />
          </>
        )}
        {!r.box && !r.sub && <span className="w-[20px] shrink-0" />}
        <span className="whitespace-nowrap"><Mixed text={r.name} /></span>
      </div>
      <div className={clsx("flex-1 flex items-center pl-[2px]", r.sel && "bg-[#d6e8f8]", r.faint && "text-[#8a8a8a]")}>
        {r.value && <Mixed text={r.value} />}
      </div>
    </div>
  );
}

function PropDialog() {
  return (
    <div className="absolute left-[972px] top-[78px] w-[281px] h-[496px] bg-white border-t-2 border-[#1d8ae0] shadow-[0_0_5px_rgba(0,0,0,0.35)] flex flex-col">
      <div className="h-[31px] flex items-center pl-[8px] shrink-0">
        <span className="mb-[4px]">属性编辑器</span>
        <div className="ml-auto w-[19px] h-[19px] bg-[#c75050] text-white flex items-center justify-center font-bold text-[11px]">x</div>
      </div>
      <div className="flex-1 mx-[1px] mb-[2px] border border-[#a9a9a9] flex flex-col">
        <div className="h-[23px] flex border-b border-[#c2c2c2] shrink-0">
          <div className="w-[22px] border-r border-[#c2c2c2] bg-[#f5f5f5]" />
          <div className="w-[120px] border-r border-[#c2c2c2] bg-linear-to-b from-white to-[#ececec] flex items-center justify-center">属性名称</div>
          <div className="flex-1 bg-linear-to-b from-[#fbdc9c] to-[#f0bd62] text-[#660066] flex items-center justify-center">属性值</div>
        </div>
        {propRows.map((r) => (
          <PropRow key={r.n} r={r} />
        ))}
      </div>
    </div>
  );
}

function FloatingIme() {
  return (
    <div className="absolute left-[729px] top-[97px] flex items-center">
      <SogouS className="w-[26px]! h-[26px]! text-[24px]! z-10" />
      <div className="h-[23px] w-[180px] -ml-[1px] bg-[#f7f7f7] border border-[#c9c9c9] flex items-center pl-[3px] mt-[5px]">
        <ImeIcons ch="中" />
      </div>
    </div>
  );
}

function StatusBar() {
  const cell = "h-full border border-[#d2d2d2] bg-[#f6f6f6] flex items-center pl-[2px] shrink-0 mr-[2px]";
  return (
    <div className="h-[20px] flex bg-[#efefef] shrink-0">
      <div className={clsx(cell, "w-[148px]")}><Mixed text="X=20187 Y=5484" /></div>
      <div className={clsx(cell, "w-[78px]")}><Mixed text="层高:2.15m" /></div>
      <div className={clsx(cell, "w-[98px]")}><Mixed text="底标高:-2.2m" /></div>
      <div className={clsx(cell, "w-[48px]")}><Mixed text="17" /></div>
      <div className={clsx(cell, "w-[916px]")}><span>按鼠标左键指定第一个角点，或拾取构件图元</span></div>
      <div className={clsx(cell, "flex-1 mr-0!")}><Mixed text="365.6 FPS" /></div>
    </div>
  );
}

function TaskIcon({ w, children, running }: { w: string; children: ReactNode; running?: boolean }) {
  return (
    <div className={clsx("relative h-full flex items-center justify-center shrink-0", w)}>
      {children}
      {running && <div className="absolute bottom-0 left-[5px] w-[41px] h-[2px] bg-[#76b9ed]" />}
    </div>
  );
}

function Taskbar() {
  return (
    <div className="h-[40px] bg-[#010d12] flex items-center text-white shrink-0">
      <div className="w-[48px] h-full bg-black flex items-center justify-center"><FaWindows size={16} /></div>
      <div className="w-[344px] h-full bg-[#333333] flex items-center pl-[10px] shrink-0">
        <div className="w-[20px] h-[20px] rounded-full border-[3px] border-[#d8d8d8]" />
        <span className="ml-[6px] text-[#8c8c8c] text-[14px]">在这里输入你要搜索的内容</span>
        <Mic size={16} strokeWidth={1.500} className="ml-auto mr-[12px] text-[#909090]" />
      </div>
      <TaskIcon w="w-[48px]">
        <svg width="20" height="16" viewBox="0 0 20 16" fill="none" stroke="#fff"><rect x="5" y="1" width="10" height="14" /><path d="M3 3H1v10h2M17 3h2v10h-2" /></svg>
      </TaskIcon>
      <TaskIcon w="w-[50px]">
        <svg width="22" height="24" viewBox="0 0 22 24" fill="#d8d8d8"><path d="M10 12C4 12 1 9 1 5s5-6 8-3c2 2 2 6 1 10zM12 12c0-6 3-11 7-10s3 7 0 9c-2 1-5 1-7 1zM12 12c6 0 9 3 9 7s-5 6-8 3c-2-2-2-6-1-10zM10 12c0 6-3 11-7 10s-3-7 0-9c2-1 5-1 7-1z" /></svg>
      </TaskIcon>
      <TaskIcon w="w-[52px]">
        <span className="relative text-[30px] leading-none font-bold text-[#e4e4e4]">e<span className="absolute left-[-4px] top-[8px] w-[26px] h-[13px] border border-[#d0d0d0] rounded-[50%] -rotate-30" /></span>
      </TaskIcon>
      <TaskIcon w="w-[50px]">
        <svg width="28" height="26" viewBox="0 0 28 26" fill="none"><circle cx="10" cy="15" r="9" stroke="#bbb" strokeWidth="1.500" /><circle cx="10" cy="15" r="5" stroke="#ccc" /><path d="M18 3c-3 0-3 3-3 6l-2 2h10l-2-2c0-3 0-6-3-6z" fill="#f0b020" /></svg>
      </TaskIcon>
      <TaskIcon w="w-[52px]">
        <span className="text-[34px] leading-none font-bold text-[#1083e0]">e</span>
      </TaskIcon>
      <TaskIcon w="w-[50px]">
        <span className="text-[30px] leading-none font-bold text-[#2b9ae8] relative">e<span className="absolute left-[-5px] top-[7px] w-[28px] h-[14px] border-2 border-[#f0c020] rounded-[50%] -rotate-30" /></span>
      </TaskIcon>
      <TaskIcon w="w-[49px]" running>
        <svg width="24" height="22" viewBox="0 0 24 22"><path d="M1 3h9l2 3h11v15H1z" fill="#f6d777" /><path d="M1 9h22v12H1z" fill="#ffe9a0" /><path d="M8 13h9v8h-3v-4h-3v4H8z" fill="#3aa0e0" /></svg>
      </TaskIcon>
      <TaskIcon w="w-[49px]" running>
        <svg width="24" height="26" viewBox="0 0 24 26" fill="none"><path d="M19 3C8 1 3 8 4 15c1 6 9 10 13 6 4-3 3-9-2-10-3 0-5 3-3 5" stroke="#2a95e8" strokeWidth="4.500" /></svg>
      </TaskIcon>
      <TaskIcon w="w-[49px]" running>
        <div className="w-[24px] h-[28px] rounded-full bg-[#6ebf30] border-2 border-[#dff5c0] flex items-center justify-center text-white font-bold text-[18px] leading-none">e</div>
      </TaskIcon>
      <TaskIcon w="w-[50px]" running>
        <div className="w-[25px] h-[27px] rounded-[3px] bg-[#f09a1a] flex items-center justify-center">
          <svg width="19" height="21" viewBox="0 0 19 21"><path d="M1 3l13-2 4 16-13 3z" fill="#fde8c4" /><path d="M4 7l9-2M5 10l9-2M5 13l9-2" stroke="#a87a40" /><path d="M10 13L17 1l2 1-7 12z" fill="#d03a1a" /></svg>
        </div>
      </TaskIcon>
      <div className="relative w-[48px] h-full bg-[#2b3a42] flex items-center justify-center shrink-0">
        <div className="w-[24px] h-[28px] rounded-[4px] bg-[#0f90f0] flex items-center justify-center">
          <svg width="18" height="18" viewBox="0 0 18 18" fill="none" stroke="#fff" strokeWidth="1.800"><path d="M9 1v13M1 8h5a3 3 0 1 0 0 5M17 8h-5a3 3 0 1 1 0 5" /></svg>
        </div>
        <div className="absolute bottom-0 left-0 w-[48px] h-[2px] bg-[#76b9ed]" />
      </div>
      <span className="ml-[87px] text-[#d4d4d4] text-[13px] whitespace-nowrap w-[26px] shrink-0">链接</span>
      <ChevronUp size={16} strokeWidth={1.500} className="ml-[5px] shrink-0" />
      <div className="ml-[8px] w-[18px] flex items-center justify-center shrink-0">
        <svg width="18" height="14" viewBox="0 0 18 14"><path d="M3 0v3M7 0v3M1 3h8v3H6v5H4V6H1z" fill="#eee" /><rect x="5" y="5" width="12" height="8" fill="#ccc" stroke="#eee" /><rect x="7" y="7" width="7" height="4" fill="#333" /></svg>
      </div>
      <div className="ml-[7px] w-[16px] shrink-0">
        <svg width="16" height="16" viewBox="0 0 16 16" fill="none" stroke="#ddd"><path d="M1 15a14 14 0 0 1 14-14M4 15a11 11 0 0 1 11-11" strokeDasharray="2 1" /><path d="M7 15a8 8 0 0 1 8-8M10 15a5 5 0 0 1 5-5" /></svg>
      </div>
      <div className="ml-[5px] w-[18px] shrink-0">
        <svg width="18" height="16" viewBox="0 0 18 16" fill="none" stroke="#eee"><path d="M1 5h3l5-4v14l-5-4H1zM12 5c1 2 1 4 0 6M15 3c2 3 2 7 0 10" /></svg>
      </div>
      <div className="ml-[8px] shrink-0">
        <svg width="24" height="16" viewBox="0 0 24 16" fill="none" stroke="#eee"><rect x=".500" y=".500" width="23" height="15" /><path d="M3 4h18M3 7h18M3 10h18M6 13h12" strokeDasharray="1.500 1" /></svg>
      </div>
      <span className="ml-[9px] text-[14px] w-[14px] shrink-0">中</span>
      <div className="ml-[14px] w-[15px] h-[18px] bg-[#ef4a17] rounded-[3px] -rotate-12 flex items-center justify-center font-bold text-[15px] leading-none shrink-0">S</div>
      <div className="ml-[6px] w-[80px] pt-[1px] flex flex-col items-center text-[13px] text-[#e4e4e4] leading-[19px] shrink-0">
        <span>18:09</span>
        <span>2018/5/24</span>
      </div>
      <div className="relative ml-[9px] w-[16px] h-[18px] bg-white shrink-0 flex flex-col gap-[2px] pt-[3px] px-[3px]">
        <span className="h-px bg-[#333]" />
        <span className="h-px bg-[#333]" />
        <span className="h-px bg-[#333]" />
        <span className="absolute left-[6px] top-[8px] w-[17px] h-[17px] rounded-full bg-[#2a2a2a] border border-[#888] flex items-center justify-center text-[12px] font-bold">1</span>
      </div>
    </div>
  );
}

export default function App() {
  return (
    <div className="relative w-[1366px] h-[768px] overflow-hidden flex flex-col bg-[#efefef] text-[12px] text-black font-['Liberation_Sans','Noto_Sans_CJK_SC',sans-serif]">
      <TitleBar />
      <MenuRow />
      <ToolRow1 />
      <div className="h-[626px] flex shrink-0">
        <LeftPanel />
        <div className="flex-1 min-w-0 ml-[2px] flex flex-col pt-[2px]">
          <RowA />
          <div className="h-[3px] shrink-0" />
          <RowB />
          <div className="h-[2px] shrink-0" />
          <RowC />
          <div className="h-[2px] shrink-0" />
          <Cad />
          <SnapBar />
          <GridPanel />
        </div>
      </div>
      <StatusBar />
      <Taskbar />

      {/* floating windows over the app */}
      <div className="absolute left-[1091px] top-[-23px] w-[47px] h-[47px] rounded-full border-2 border-[#dfe6df] bg-linear-to-b from-[#2fae4d] to-[#47c463] shadow-[0_2px_3px_rgba(0,0,0,0.4)] flex items-end justify-center pb-[9px] text-white font-bold text-[11px]">71</div>
      <FloatingIme />
      <PropDialog />
      <div className="absolute left-[962px] top-[372px] w-[235px] h-[61px] border-[3px] border-[#ff0000]" />
    </div>
  );
}
